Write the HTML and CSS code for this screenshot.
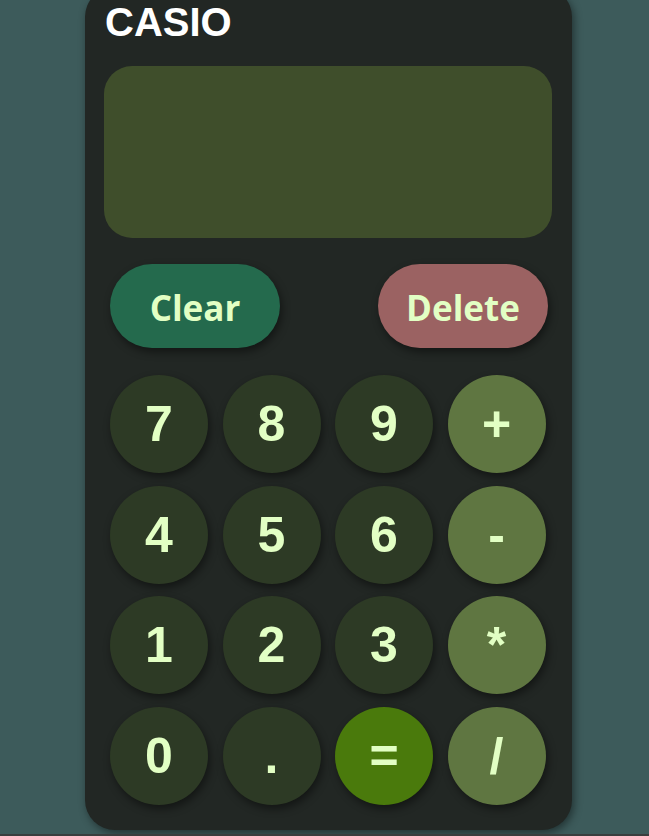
FILE: index.html
```html
<!DOCTYPE html>
<html lang="en">
<head>
<meta charset="utf-8">
<title>Calculator</title>
<link rel="stylesheet" href="styles.css">
</head>
<body>
<div class="calc">
  <div class="brand">CASIO</div>
  <div class="display"></div>
  <div class="top-row">
    <button class="wide clear">Clear</button>
    <button class="wide delete">Delete</button>
  </div>
  <div class="keys">
    <button class="key num">7</button>
    <button class="key num">8</button>
    <button class="key num">9</button>
    <button class="key op">+</button>
    <button class="key num">4</button>
    <button class="key num">5</button>
    <button class="key num">6</button>
    <button class="key op">-</button>
    <button class="key num">1</button>
    <button class="key num">2</button>
    <button class="key num">3</button>
    <button class="key op">*</button>
    <button class="key num">0</button>
    <button class="key num">.</button>
    <button class="key eq">=</button>
    <button class="key op">/</button>
  </div>
</div>
</body>
</html>
```
FILE: styles.css
```css
html {
  background: #3a3e3e;
}
body {
  margin: 0;
  height: 834px;
  background: #3d5b5b;
  display: flex;
  justify-content: center;
  overflow: hidden;
}
.calc {
  box-sizing: border-box;
  width: 487px;
  height: 843px;
  margin-top: -13px;
  margin-left: 8px;
  padding: 15px 20px 0 19px;
  background: #222724;
  border-radius: 30px;
  box-shadow: 2px 3px 8px rgba(0, 0, 0, 0.45);
}
.brand {
  font-family: "Liberation Sans", Arial, sans-serif;
  font-weight: bold;
  font-size: 40px;
  line-height: 40px;
  color: #ffffff;
  padding-left: 1px;
}
.display {
  margin-top: 24px;
  height: 172px;
  background: #3f4e2b;
  border-radius: 28px;
}
.top-row {
  margin-top: 26px;
  padding: 0 4px 0 6px;
  display: flex;
  justify-content: space-between;
}
button {
  border: none;
  margin: 0;
  padding: 0;
  color: #e2ffc4;
  cursor: pointer;
}
.wide {
  width: 170px;
  height: 84px;
  border-radius: 42px;
  font-family: "Open Sans", "DejaVu Sans", sans-serif;
  font-weight: 700;
  font-size: 35px;
  padding-top: 2px;
  box-shadow: 2px 4px 8px rgba(0, 0, 0, 0.45);
}
.clear {
  background: #246a4d;
}
.delete {
  background: #9b6262;
}
.keys {
  margin-top: 27px;
  padding-left: 6px;
  display: grid;
  grid-template-columns: repeat(4, 98px);
  column-gap: 14.5px;
  row-gap: 12.5px;
}
.key {
  width: 98px;
  height: 98px;
  border-radius: 50%;
  font-family: "Liberation Sans", Arial, sans-serif;
  font-weight: bold;
  font-size: 50px;
  box-shadow: 2px 4px 8px rgba(0, 0, 0, 0.45);
}
.num {
  background: #2d3a25;
}
.op {
  background: #5f7641;
}
.eq {
  background: #4a7a0c;
}
```
